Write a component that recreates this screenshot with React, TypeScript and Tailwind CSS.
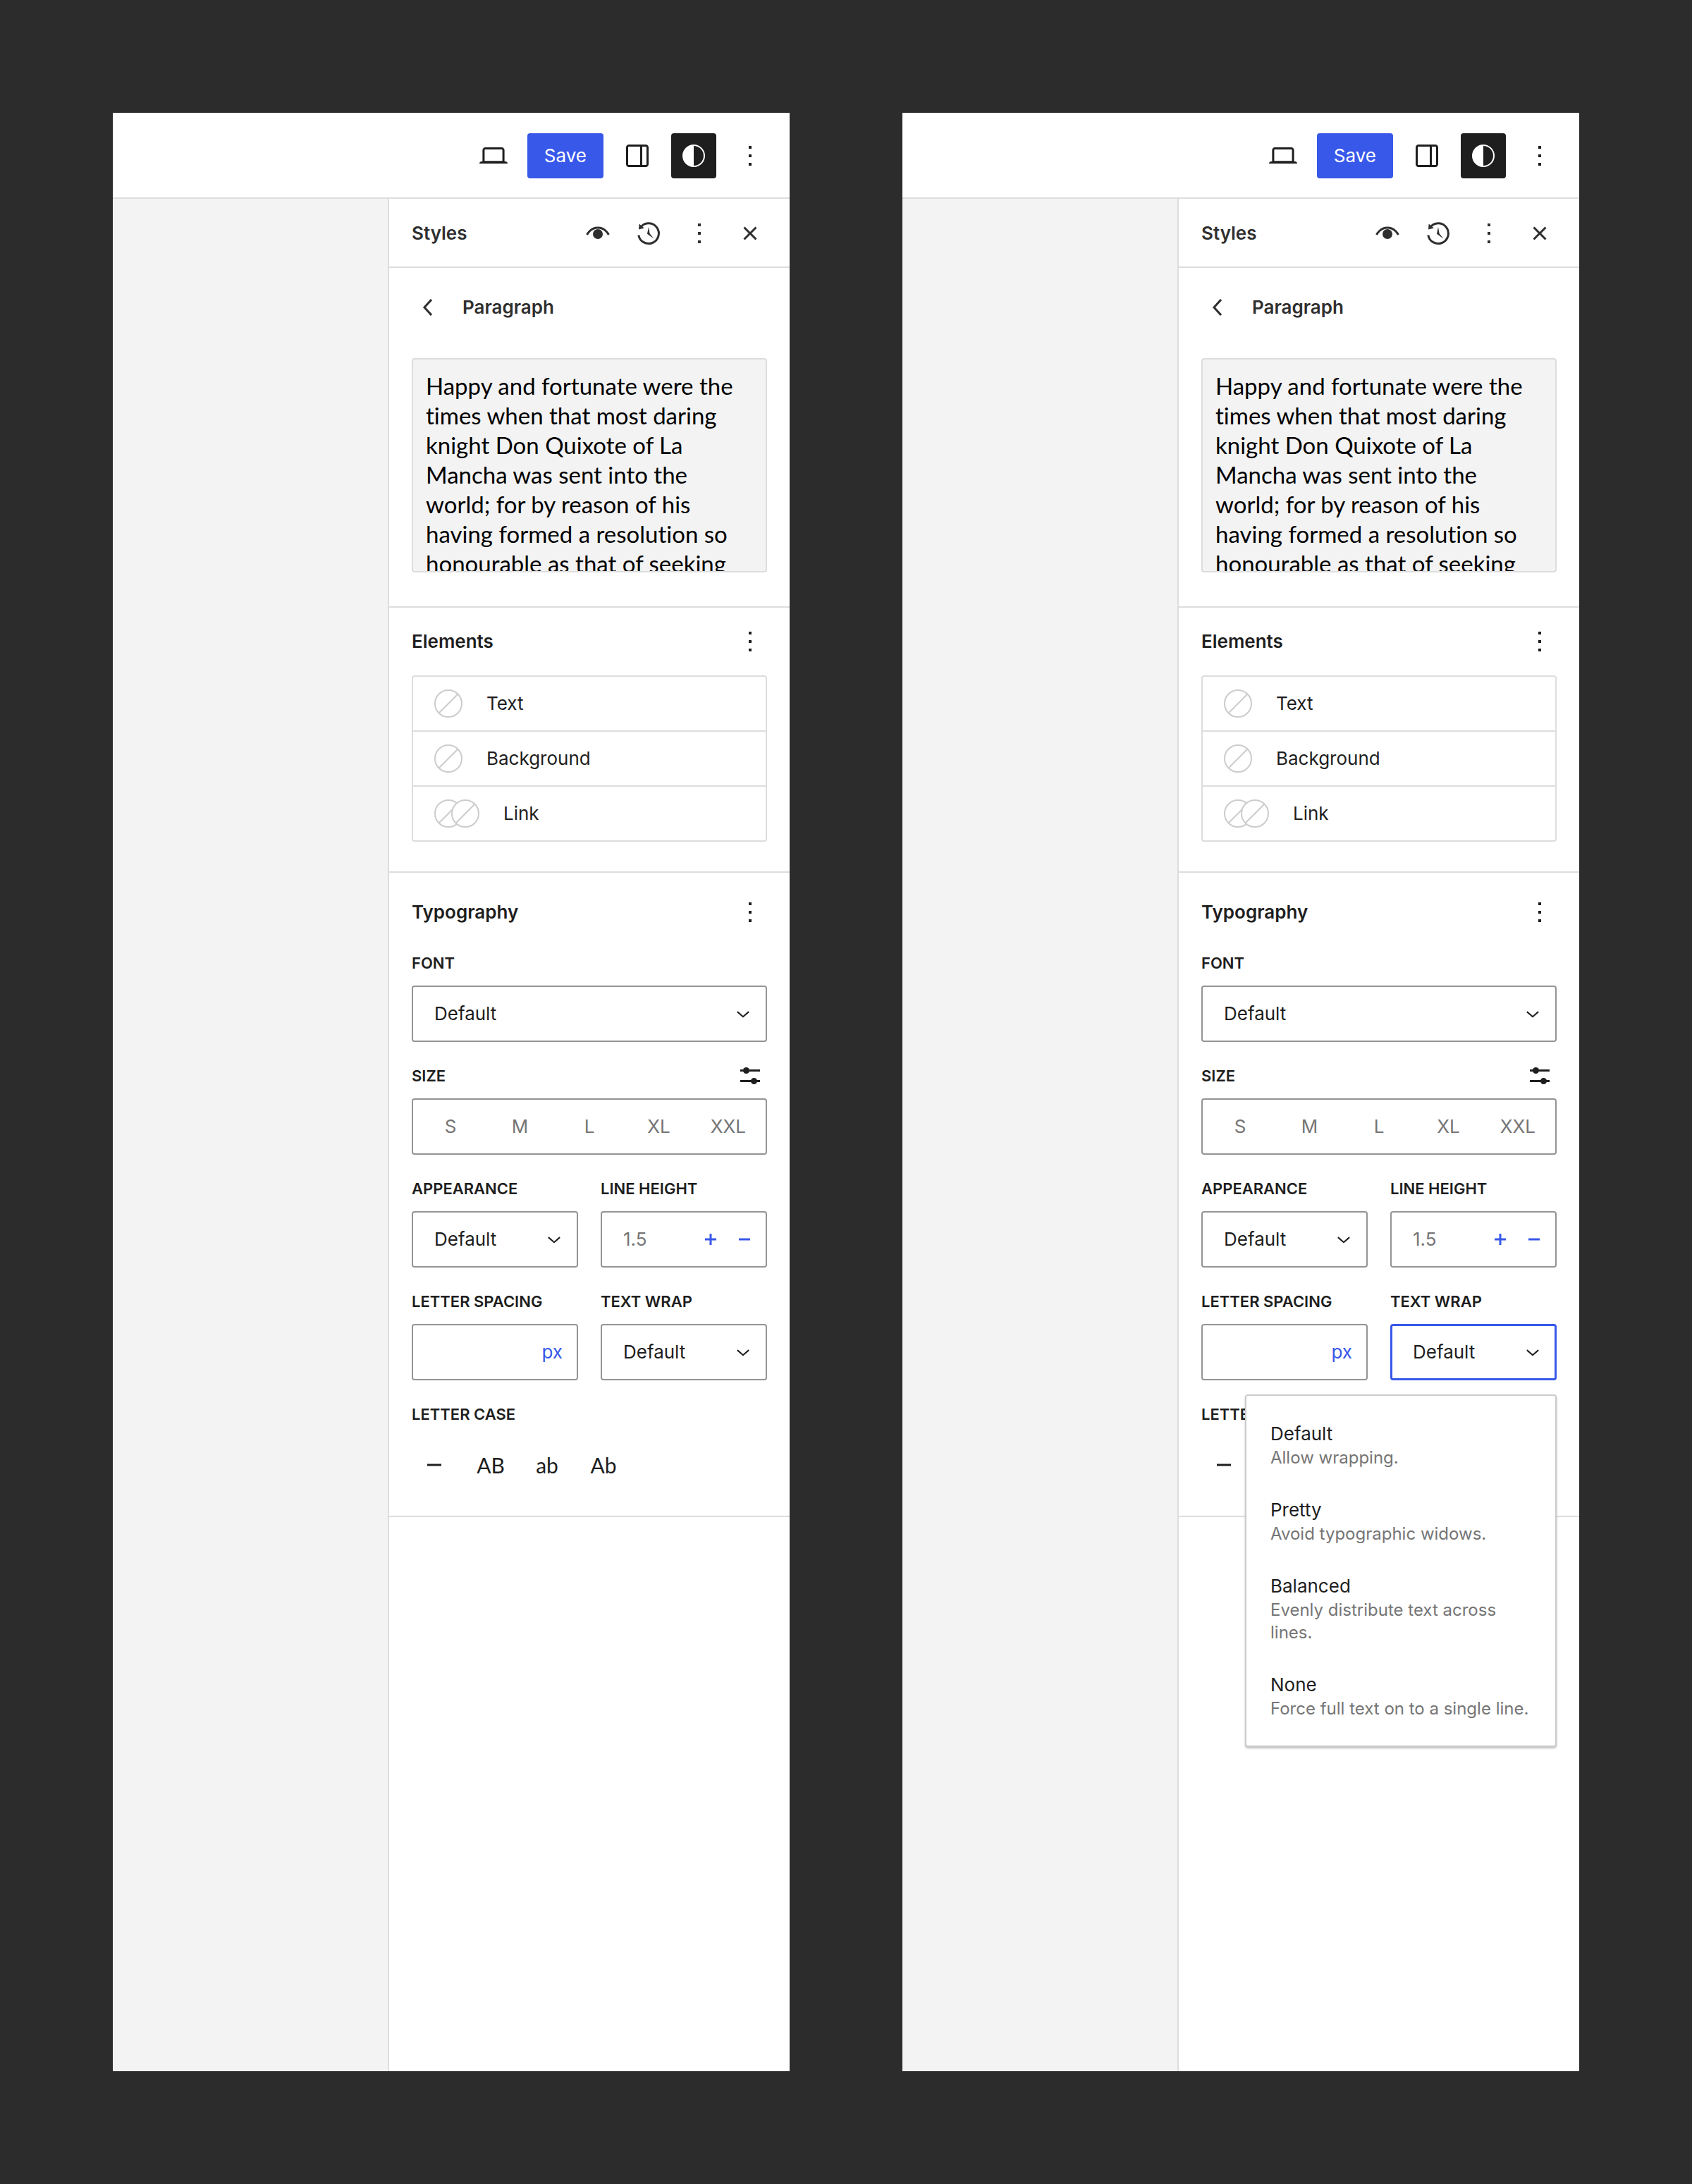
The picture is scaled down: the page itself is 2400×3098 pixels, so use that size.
import type { ReactNode } from 'react'

const previewLines = [
  'Happy and fortunate were the',
  'times when that most daring',
  'knight Don Quixote of La',
  'Mancha was sent into the',
  'world; for by reason of his',
  'having formed a resolution so',
  'honourable as that of seeking',
]

const sizes = ['S', 'M', 'L', 'XL', 'XXL']

const wrapOptions = [
  { name: 'Default', help: 'Allow wrapping.' },
  { name: 'Pretty', help: 'Avoid typographic widows.' },
  { name: 'Balanced', help: 'Evenly distribute text across lines.' },
  { name: 'None', help: 'Force full text on to a single line.' },
]

function Icon({ children, className = 'size-12' }: { children: ReactNode; className?: string }) {
  return (
    <svg viewBox="0 0 24 24" fill="currentColor" className={`${className} shrink-0`} aria-hidden="true">
      {children}
    </svg>
  )
}

const desktop = (
  <path d="M20.5 16h-.7V8c0-1.1-.9-2-2-2H6.2c-1.1 0-2 .9-2 2v8h-.7c-.8 0-1.5.7-1.5 1.5h20c0-.8-.7-1.5-1.5-1.5zM5.7 8c0-.3.2-.5.5-.5h11.6c.3 0 .5.2.5.5v7.6H5.7V8z" />
)
const drawer = (
  <path d="M18 4H6c-1.1 0-2 .9-2 2v12c0 1.1.9 2 2 2h12c1.1 0 2-.9 2-2V6c0-1.1-.9-2-2-2zm-4 14.5H6c-.3 0-.5-.2-.5-.5V6c0-.3.2-.5.5-.5h8v13zm4.5-.5c0 .3-.2.5-.5.5h-2.5v-13H18c.3 0 .5.2.5.5v12z" />
)
const contrast = <path d="M12 4a8 8 0 1 0 0 16 8 8 0 0 0 0-16zm0 15V5a7 7 0 0 1 0 14z" />
const more = <path d="M13 19h-2v-2h2v2zm0-6h-2v-2h2v2zm0-6h-2V5h2v2z" />
const close = (
  <path d="M12 13.06l3.712 3.713 1.061-1.06L13.061 12l3.712-3.712-1.06-1.06L12 10.938 8.288 7.227l-1.061 1.06L10.939 12l-3.712 3.712 1.06 1.061L12 13.061z" />
)
const eye = (
  <>
    <path d="M4.3 13s2.3-5 7.7-5 7.7 5 7.7 5" fill="none" stroke="currentColor" strokeWidth="1.5" />
    <circle cx="12" cy="12.5" r="3.5" />
  </>
)
const history = (
  <>
    <path d="M4.9 13.2a7.2 7.2 0 1 0 1.8-6" fill="none" stroke="currentColor" strokeWidth="1.5" />
    <path d="M5.3 5.3l3.6 3-3.9 1zM12 7.5l.8 4.6 2.9 3.7-4.7-3.4z" />
  </>
)
const chevronLeft = <path d="M14.6 7l-1.2-1L8 12l5.4 6 1.2-1-4.6-5z" />
const chevronDown = <path d="M6.6 10.1l5.4 4.7 5.4-4.7" fill="none" stroke="currentColor" strokeWidth="1.4" />
const sliders = (
  <>
    <path d="M5 7.5h14V9H5zM5 15h14v1.5H5z" />
    <circle cx="9.25" cy="8.25" r="2.25" />
    <circle cx="14.75" cy="15.75" r="2.25" />
  </>
)

function IconButton({ label, children, className = 'text-[#1e1e1e]' }: { label: string; children: ReactNode; className?: string }) {
  return (
    <button type="button" aria-label={label} className={`flex shrink-0 items-center justify-center ${className}`}>
      <Icon>{children}</Icon>
    </button>
  )
}

function Swatch({ className = '' }: { className?: string }) {
  return (
    <svg viewBox="0 0 40 40" className={`size-10 shrink-0 ${className}`} aria-hidden="true">
      <circle cx="20" cy="20" r="19" fill="#fff" stroke="#ccc" strokeWidth="2" />
      <path d="M6.5 33.5l27-27" stroke="#ccc" strokeWidth="2" />
    </svg>
  )
}

function ElementRow({ label, double = false }: { label: string; double?: boolean }) {
  return (
    <button type="button" className="flex h-[78px] w-full items-center px-[30px] text-left last:h-[76px]">
      <Swatch />
      {double && <Swatch className="-ml-4" />}
      <span className="ml-[34px]">{label}</span>
    </button>
  )
}

function Label({ htmlFor, children }: { htmlFor: string; children: ReactNode }) {
  return (
    <label htmlFor={htmlFor} className="block text-[22px] leading-8 font-semibold uppercase">
      {children}
    </label>
  )
}

function SelectField({ id, label, focused = false }: { id: string; label: string; focused?: boolean }) {
  return (
    <div>
      <Label htmlFor={id}>{label}</Label>
      <div className="mt-4 grid items-center">
        <select
          id={id}
          className={`col-start-1 row-start-1 h-20 w-full appearance-none rounded-[4px] bg-white outline-none ${
            focused ? 'border-3 border-[#3858e9] px-[29px]' : 'border-2 border-[#949494] px-[30px]'
          }`}
        >
          <option>Default</option>
        </select>
        <Icon className="pointer-events-none col-start-1 row-start-1 mr-4 size-9 justify-self-end">{chevronDown}</Icon>
      </div>
    </div>
  )
}

function SectionHeader({ title }: { title: string }) {
  return (
    <div className="flex items-center justify-between">
      <h2 className="font-semibold">{title}</h2>
      <IconButton label={`${title} options`}>{more}</IconButton>
    </div>
  )
}

function WrapMenu() {
  return (
    <ul
      role="listbox"
      aria-label="Text wrap"
      className="absolute top-full right-0 z-10 mt-5 flex w-[442px] flex-col gap-10 rounded-[4px] border-2 border-[#ccc] bg-white px-[34px] py-9 shadow-[0_2px_3px_rgba(0,0,0,0.25)]"
    >
      {wrapOptions.map((option) => (
        <li key={option.name} role="option" aria-selected={option.name === 'Default'}>
          <div className="leading-9">{option.name}</div>
          <div className="-mr-4 text-2xl leading-8 text-[#757575]">{option.help}</div>
        </li>
      ))}
    </ul>
  )
}

function Editor({ id, menuOpen = false }: { id: string; menuOpen?: boolean }) {
  return (
    <section className="flex min-w-0 flex-col bg-white">
      <header className="flex h-[122px] items-center justify-end gap-4 border-t-2 border-b-2 border-t-white border-b-[#ddd] pr-6">
        <IconButton label="View" className="size-16 text-[#1e1e1e]">{desktop}</IconButton>
        <button type="button" className="h-16 rounded-[4px] bg-[#3858e9] px-6 text-white">
          Save
        </button>
        <IconButton label="Settings" className="size-16 text-[#1e1e1e]">{drawer}</IconButton>
        <IconButton label="Styles" className="size-16 rounded-[4px] bg-[#1e1e1e] text-white">{contrast}</IconButton>
        <IconButton label="Options" className="size-16 text-[#1e1e1e]">{more}</IconButton>
      </header>

      <div className="flex flex-1">
        <main className="flex-1 bg-[#f3f3f3]" />
        <aside className="w-[570px] shrink-0 border-l-2 border-[#ddd]">
          <div className="flex h-[98px] items-center gap-6 border-t-2 border-b-2 border-t-white border-b-[#ddd] px-8 text-[#2f2f2f]">
            <h1 className="mr-auto font-semibold">Styles</h1>
            <IconButton label="Style book" className="">{eye}</IconButton>
            <IconButton label="Revisions" className="">{history}</IconButton>
            <IconButton label="More" className="">{more}</IconButton>
            <IconButton label="Close" className="">{close}</IconButton>
          </div>

          <div className="border-b-2 border-[#ddd] px-8 pt-8 pb-12">
            <div className="flex items-center gap-6 text-[#2f2f2f]">
              <IconButton label="Back" className="">{chevronLeft}</IconButton>
              <h2 className="font-semibold">Paragraph</h2>
            </div>
            <div className="mt-12 h-[304px] overflow-hidden rounded-[4px] border-2 border-[#ddd] bg-[#f3f3f3] px-[18px] pt-4 font-[Lato,sans-serif] text-[33px] leading-[42px] whitespace-nowrap text-black [font-variant-ligatures:none]">
              {previewLines.map((line) => (
                <p key={line}>{line}</p>
              ))}
            </div>
          </div>

          <div className="border-b-2 border-[#ddd] px-8 pt-6 pb-[42px]">
            <SectionHeader title="Elements" />
            <div className="mt-6 divide-y-2 divide-[#ddd] rounded-[4px] border-2 border-[#ddd]">
              <ElementRow label="Text" />
              <ElementRow label="Background" />
              <ElementRow label="Link" double />
            </div>
          </div>

          <div className="border-b-2 border-[#ddd] px-8 pt-8 pb-10">
            <SectionHeader title="Typography" />
            <div className="mt-8 flex flex-col gap-8">
              <SelectField id={`${id}-font`} label="Font" />

              <div role="group" aria-labelledby={`${id}-size`}>
                <div className="flex h-8 items-center justify-between">
                  <span id={`${id}-size`} className="text-[22px] leading-8 font-semibold uppercase">Size</span>
                  <IconButton label="Set custom size">{sliders}</IconButton>
                </div>
                <div className="mt-4 grid h-20 grid-cols-5 rounded-[4px] border-2 border-[#949494] px-1 text-[#757575]">
                  {sizes.map((size) => (
                    <button key={size} type="button">
                      {size}
                    </button>
                  ))}
                </div>
              </div>

              <div className="grid grid-cols-2 gap-8">
                <SelectField id={`${id}-appearance`} label="Appearance" />
                <div>
                  <Label htmlFor={`${id}-line-height`}>Line height</Label>
                  <div className="mt-4 flex h-20 items-center rounded-[4px] border-2 border-[#949494] pr-[6px] pl-[30px] text-[#3858e9]">
                    <input
                      id={`${id}-line-height`}
                      placeholder="1.5"
                      className="w-full min-w-0 flex-1 outline-none placeholder:text-[#757575]"
                    />
                    <IconButton label="Increase" className="">
                      <path d="M11.25 8h1.5v3.25H16v1.5h-3.25V16h-1.5v-3.25H8v-1.5h3.25z" />
                    </IconButton>
                    <IconButton label="Decrease" className="">
                      <path d="M8 11.25h8v1.5H8z" />
                    </IconButton>
                  </div>
                </div>

                <div>
                  <Label htmlFor={`${id}-letter-spacing`}>Letter spacing</Label>
                  <div className="mt-4 flex h-20 items-center rounded-[4px] border-2 border-[#949494] pr-5 pl-[30px]">
                    <input id={`${id}-letter-spacing`} className="w-full min-w-0 flex-1 outline-none" />
                    <button type="button" className="text-[#3858e9]">px</button>
                  </div>
                </div>
                <div className="relative">
                  <SelectField id={`${id}-wrap`} label="Text wrap" focused={menuOpen} />
                  {menuOpen && <WrapMenu />}
                </div>
              </div>

              <div role="group" aria-labelledby={`${id}-case`}>
                <div id={`${id}-case`} className="text-[22px] leading-8 font-semibold uppercase">Letter case</div>
                <div className="mt-6 flex gap-4 font-[Lato,sans-serif] text-[30px]">
                  <IconButton label="None" className="size-16">
                    <path d="M7 11.25h10v1.5H7z" />
                  </IconButton>
                  <button type="button" className="size-16">AB</button>
                  <button type="button" className="size-16">ab</button>
                  <button type="button" className="size-16">Ab</button>
                </div>
              </div>
            </div>
          </div>
        </aside>
      </div>
    </section>
  )
}

export default function App() {
  return (
    <div className="grid min-h-screen grid-cols-2 gap-40 bg-[#2c2c2c] p-40 font-[Inter,sans-serif] text-[26px] leading-8 text-[#1e1e1e]">
      <Editor id="closed" />
      <Editor id="open" menuOpen />
    </div>
  )
}
